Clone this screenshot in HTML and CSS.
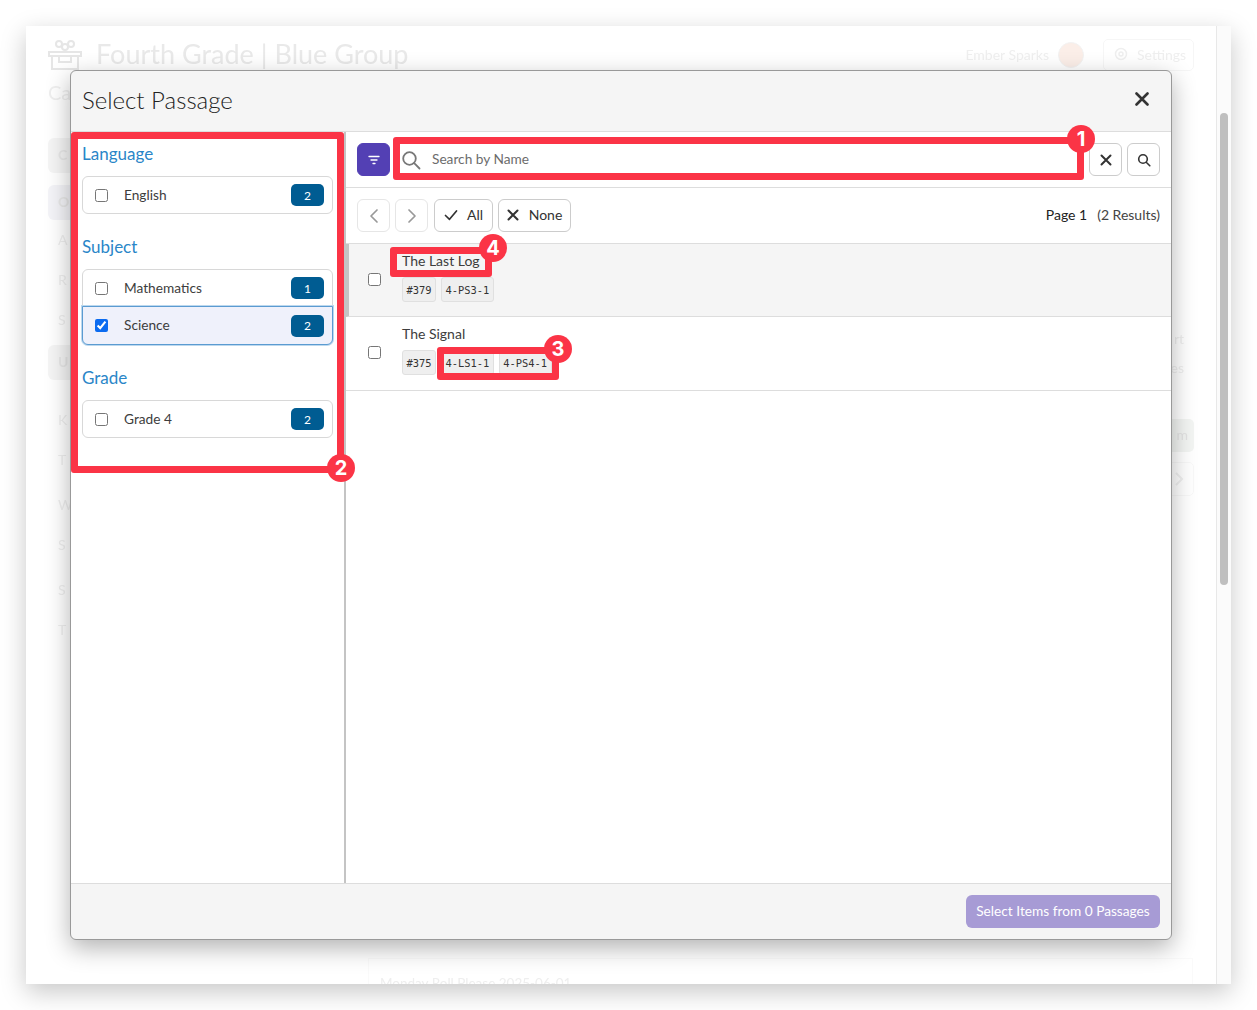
FILE: index.html
```html
<!DOCTYPE html>
<html lang="en">
<head>
<meta charset="utf-8">
<title>Select Passage</title>
<link rel="stylesheet" href="styles.css">
</head>
<body>
<div class="window">
  <main class="page">
    <header class="page-head">
      <svg class="gift" viewBox="0 0 34 30" width="34" height="30"><circle cx="11" cy="4" r="3" fill="none" stroke="#e6e6e6" stroke-width="2"/><circle cx="17" cy="7" r="3" fill="none" stroke="#e6e6e6" stroke-width="2"/><circle cx="23" cy="4" r="3" fill="none" stroke="#e6e6e6" stroke-width="2"/><path d="M1 12h32v4H1zM4 16v13h26V16M11 16v6h12v-6" fill="none" stroke="#e6e6e6" stroke-width="2"/></svg>
      <h1 class="page-title">Fourth Grade | Blue Group</h1>
      <span class="head-spacer"></span>
      <span class="page-user">Ember Sparks</span>
      <span class="avatar"></span>
      <span class="settings"><svg viewBox="0 0 14 14" width="14" height="14"><circle cx="7" cy="7" r="5.500" fill="none" stroke="#efefef" stroke-width="1.500"/><circle cx="7" cy="7" r="2" fill="none" stroke="#efefef" stroke-width="1.500"/></svg>Settings</span>
    </header>
    <div class="page-body">
      <nav class="side">
        <div class="side-sub">Ca</div>
        <div class="tile">C</div>
        <div class="tile tile-blue">O</div>
        <div class="side-text">A</div>
        <div class="side-text">R</div>
        <div class="side-text">S</div>
        <div class="tile tile-gap">U</div>
        <div class="side-text side-gap">K</div>
        <div class="side-text">T</div>
        <div class="side-text side-step">W</div>
        <div class="side-text">S</div>
        <div class="side-text side-step">S</div>
        <div class="side-text">T</div>
      </nav>
      <div class="aside-ghost">
        <div class="ghost-word">rt</div>
        <div class="ghost-word">es</div>
        <div class="ghost-btn">m</div>
        <div class="ghost-arrow"><svg viewBox="0 0 10 16" width="10" height="16"><path d="M2 2l6 6-6 6" fill="none" stroke="#f0f0f0" stroke-width="2"/></svg></div>
      </div>
    </div>
    <div class="date-card">Monday Roll Please 2025-06-01</div>
  </main>
  <aside class="scroll"><span class="thumb"></span></aside>

  <section class="modal">
    <div class="modal-head">
      <h2 class="modal-title">Select Passage</h2>
      <svg class="close" viewBox="0 0 14 14" width="14" height="14"><path d="M1.500 1.500l11 11M12.500 1.500l-11 11" stroke="#333" stroke-width="2.600" stroke-linecap="round"/></svg>
    </div>
    <div class="modal-body">
      <div class="filters">
        <h3 class="facet-title">Language</h3>
        <ul class="facet">
          <li class="facet-row"><input type="checkbox" class="check"><span class="facet-label">English</span><span class="count">2</span></li>
        </ul>
        <h3 class="facet-title">Subject</h3>
        <ul class="facet">
          <li class="facet-row"><input type="checkbox" class="check"><span class="facet-label">Mathematics</span><span class="count">1</span></li>
          <li class="facet-row active"><input type="checkbox" class="check" checked><span class="facet-label">Science</span><span class="count">2</span></li>
        </ul>
        <h3 class="facet-title">Grade</h3>
        <ul class="facet">
          <li class="facet-row"><input type="checkbox" class="check"><span class="facet-label">Grade 4</span><span class="count">2</span></li>
        </ul>
      </div>
      <div class="results">
        <div class="search-bar">
          <button class="btn-square purple"><svg viewBox="0 0 12 10" width="12" height="10"><path d="M1 1.500h10M3 5h6M5 8.500h2" stroke="#fff" stroke-width="1.300" stroke-linecap="round"/></svg></button>
          <div class="search-field">
            <svg viewBox="0 0 20 20" width="20" height="20"><circle cx="8.500" cy="8.500" r="6.300" fill="none" stroke="#777" stroke-width="1.800"/><path d="M13.200 13.200l5.300 5.300" stroke="#777" stroke-width="1.800" stroke-linecap="round"/></svg>
            <span class="placeholder">Search by Name</span>
          </div>
          <button class="btn-square"><svg viewBox="0 0 12 12" width="12" height="12"><path d="M1.500 1.500l9 9M10.500 1.500l-9 9" stroke="#333" stroke-width="2" stroke-linecap="round"/></svg></button>
          <button class="btn-square"><svg viewBox="0 0 14 14" width="14" height="14"><circle cx="6" cy="6" r="4.300" fill="none" stroke="#333" stroke-width="1.600"/><path d="M9.200 9.200l3.600 3.600" stroke="#333" stroke-width="1.600" stroke-linecap="round"/></svg></button>
        </div>
        <div class="pager">
          <button class="btn-square faded"><svg viewBox="0 0 10 16" width="10" height="16"><path d="M8 2L2 8l6 6" fill="none" stroke="#999" stroke-width="1.700" stroke-linecap="round" stroke-linejoin="round"/></svg></button>
          <button class="btn-square faded"><svg viewBox="0 0 10 16" width="10" height="16"><path d="M2 2l6 6-6 6" fill="none" stroke="#999" stroke-width="1.700" stroke-linecap="round" stroke-linejoin="round"/></svg></button>
          <button class="btn-text btn-all"><svg viewBox="0 0 14 12" width="14" height="12"><path d="M1.500 6.500l4 3.800 7-8.300" fill="none" stroke="#333" stroke-width="1.700" stroke-linecap="round" stroke-linejoin="round"/></svg>All</button>
          <button class="btn-text btn-none"><svg viewBox="0 0 12 12" width="12" height="12"><path d="M1.500 1.500l9 9M10.500 1.500l-9 9" stroke="#333" stroke-width="2" stroke-linecap="round"/></svg>None</button>
          <span class="pager-spacer"></span>
          <span class="page-num">Page 1</span>
          <span class="page-total">(2 Results)</span>
        </div>
        <div class="passage selected">
          <input type="checkbox" class="check">
          <div class="passage-main">
            <div class="passage-name">The Last Log</div>
            <div class="tags"><code class="tag">#379</code><code class="tag">4-PS3-1</code></div>
          </div>
        </div>
        <div class="passage">
          <input type="checkbox" class="check">
          <div class="passage-main">
            <div class="passage-name">The Signal</div>
            <div class="tags"><code class="tag">#375</code><code class="tag">4-LS1-1</code><code class="tag">4-PS4-1</code></div>
          </div>
        </div>
      </div>
    </div>
    <div class="modal-foot">
      <button class="submit">Select Items from 0 Passages</button>
    </div>

    <div class="mark m1"></div><span class="pin p1">1</span>
    <div class="mark m2"></div><span class="pin p2">2</span>
    <div class="mark m3"></div><span class="pin p3">3</span>
    <div class="mark m4"></div><span class="pin p4">4</span>
  </section>
</div>
</body>
</html>
```

FILE: styles.css
```css
* { box-sizing: border-box; }
html, body { margin: 0; height: 100%; background: #fff; overflow: hidden; }
body { font-family: Lato, "Noto Sans", sans-serif; color: #333; }
ul { list-style: none; margin: 0; padding: 0; }
h1, h2, h3 { margin: 0; font-weight: 400; }
button { font-family: inherit; }

.window { position: absolute; left: 26px; top: 26px; width: 1205px; height: 958px; background: #fff; box-shadow: 0 8px 24px rgba(0,0,0,.22); display: flex; overflow: hidden; }
.page { flex: 1; min-width: 0; position: relative; padding: 13px 22px 0; filter: blur(.5px); }
.page-head { display: flex; align-items: center; height: 32px; }
.page-title { font-size: 27px; color: #e9e9e9; margin: 0 0 3px 14px; white-space: nowrap; }
.head-spacer { flex: 1; }
.page-user { font-size: 14px; color: #efefef; margin-bottom: 2px; }
.avatar { width: 26px; height: 26px; border-radius: 50%; border: 1px solid #f2f2f2; background: #fbeee8; margin: 0 19px 0 9px; }
.settings { height: 32px; width: 91px; display: flex; align-items: center; gap: 9px; font-size: 14px; color: #efefef; border: 1px solid #f6f6f6; border-radius: 5px; padding: 0 0 2px 10px; }
.page-body { display: flex; justify-content: space-between; }
.side { width: 40px; display: flex; flex-direction: column; color: #efefef; }
.side-sub { font-size: 20px; height: 28px; line-height: 28px; margin: 7px 0 32px; }
.tile { height: 35px; width: 40px; margin-bottom: 12px; border-radius: 6px; background: #f5f5f5; color: #e8e8e8; font-size: 14px; font-weight: 700; padding: 8px 10px; }
.tile-blue { background: #f4f4f8; margin-bottom: 0; }
.tile-gap { margin: 5px 0 0; }
.side-text { height: 40px; line-height: 40px; font-size: 14px; padding-left: 10px; }
.side-gap { margin-top: 20px; }
.side-step { margin-top: 5px; }
.aside-ghost { width: 40px; padding-top: 253px; display: flex; flex-direction: column; align-items: flex-end; color: #efefef; font-size: 14px; }
.ghost-word { height: 29px; line-height: 29px; padding-right: 10px; }
.ghost-btn { width: 30px; height: 33px; margin-top: 37px; border-radius: 5px; background: #f3f5f3; color: #e3e3e3; text-align: right; padding: 7px 6px 0 0; }
.ghost-arrow { width: 30px; height: 34px; margin-top: 10px; border: 1px solid #f8f8f8; border-radius: 5px; display: flex; align-items: center; justify-content: center; }
.date-card { position: absolute; left: 342px; top: 932px; width: 825px; height: 40px; border: 1px solid #fafafa; padding: 16px 0 0 11px; font-size: 13.500px; color: #eeeeee; white-space: nowrap; }
.scroll { flex: none; width: 15px; border-left: 1px solid #e8e8e8; background: #fbfbfb; position: relative; }
.thumb { position: absolute; left: 3px; top: 87px; width: 8px; height: 472px; border-radius: 4px; background: #bfbfbf; }

.modal { position: absolute; left: 44px; top: 44px; width: 1102px; height: 870px; background: #f5f5f5; border: 1px solid #999; border-radius: 6px; box-shadow: 0 8px 24px rgba(0,0,0,.3); display: flex; flex-direction: column; }
.modal-head { height: 60px; flex: none; display: flex; align-items: center; justify-content: space-between; padding: 0 22px 4px 11px; }
.modal-title { font-size: 24px; font-weight: 300; color: #222; }
.modal-body { flex: 1; display: flex; background: #fff; border-top: 1px solid #ddd; border-bottom: 1px solid #ddd; min-height: 0; }
.modal-foot { height: 55px; flex: none; display: flex; align-items: center; justify-content: flex-end; padding: 0 11px; }
.submit { width: 194px; height: 33px; border: 0; border-radius: 6px; background: #a79bd5; color: #fff; font-size: 13.700px; padding: 0 0 2px; }

.filters { width: 275px; flex: none; border-right: 2px solid #c4c4c4; padding: 11px 11px 0; }
.facet-title { font-size: 17px; line-height: 21px; color: #2a86c8; margin-bottom: 12px; }
.facet { margin-bottom: 22px; }
.facet-row { height: 38px; display: flex; align-items: center; border: 1px solid #d8d8d8; padding: 0 8px 0 12px; font-size: 13.700px; color: #3d3d3d; }
.facet-row:first-child { border-radius: 6px 6px 0 0; }
.facet-row:last-child { border-radius: 0 0 6px 6px; }
.facet-row:only-child { border-radius: 6px; }
.facet-row + .facet-row { margin-top: -1px; }
.facet-row.active { position: relative; height: 39px; background: #eff1fb; border-color: #5b9bd1; box-shadow: 0 0 0 1px #bcd8ee; }
.check { width: 13px; height: 13px; margin: 0; flex: none; accent-color: #0b6bf0; }
.facet-label { flex: 1; margin: 0 0 2px 16px; }
.count { width: 33px; height: 22px; border-radius: 5px; background: #005c92; color: #fff; font-size: 12px; display: flex; align-items: center; justify-content: center; }

.results { flex: 1; min-width: 0; display: flex; flex-direction: column; }
.search-bar { height: 56px; flex: none; display: flex; align-items: center; gap: 5px; padding: 0 11px; border-bottom: 1px solid #ddd; }
.btn-square { width: 33px; height: 33px; flex: none; border: 1px solid #ccc; border-radius: 6px; background: #fff; display: flex; align-items: center; justify-content: center; padding: 0; }
.btn-square.purple { background: #5340b4; border-color: #5340b4; }
.btn-square.faded { border-color: #e6e6e6; }
.search-field { flex: 1; height: 33px; display: flex; align-items: center; padding-left: 6px; gap: 11px; background: #fff; }
.placeholder { font-size: 13.700px; color: #6c6c6c; margin-bottom: 2px; }
.pager { height: 56px; flex: none; display: flex; align-items: center; gap: 5px; padding: 0 11px; border-bottom: 1px solid #ddd; font-size: 14px; }
.btn-text { height: 33px; border: 1px solid #ccc; border-radius: 6px; background: #fff; font-size: 14px; color: #333; padding: 0 0 2px; display: flex; align-items: center; justify-content: center; gap: 9px; }
.btn-all { width: 59px; margin-left: 1px; }
.btn-none { width: 73px; gap: 10px; }
.pager-spacer { flex: 1; }
.page-num { color: #222; margin: 0 5px 2px 0; }
.page-total { color: #444; margin-bottom: 2px; }
.passage { height: 74px; flex: none; display: flex; border-bottom: 1px solid #ddd; padding: 7px 0 0 22px; align-items: flex-start; }
.passage .check { margin-top: 22px; }
.passage.selected { height: 73px; background: #f5f5f5; border-left: 3px solid #c4c4c4; padding-left: 19px; }
.passage-main { margin-left: 21px; }
.passage-name { font-size: 14px; line-height: 20px; color: #3d3d3d; }
.tags { display: flex; gap: 5px; margin-top: 6px; }
.tag { font-family: "DejaVu Sans Mono", monospace; font-size: 10.400px; line-height: 25px; height: 25px; padding: 0 3.500px; background: #efefef; border: 1px solid #e0e0e0; border-radius: 3px; color: #333; }

.mark { position: absolute; border: 7px solid #fb3446; border-radius: 3px; pointer-events: none; }
.m1 { left: 322px; top: 66px; width: 691px; height: 43px; }
.m2 { left: 0; top: 61px; width: 273px; height: 341px; }
.m3 { left: 366px; top: 276px; width: 122px; height: 33px; }
.m4 { left: 319px; top: 176px; width: 102px; height: 30px; }
.pin { position: absolute; width: 28px; height: 28px; border-radius: 50%; background: #fb3446; color: #fff; font-family: Inter, "Liberation Sans", sans-serif; font-weight: 700; font-size: 20px; display: flex; align-items: center; justify-content: center; }
.p1 { left: 996px; top: 54px; }
.p2 { left: 256px; top: 383px; }
.p3 { left: 473px; top: 264px; }
.p4 { left: 408px; top: 163px; }
```
